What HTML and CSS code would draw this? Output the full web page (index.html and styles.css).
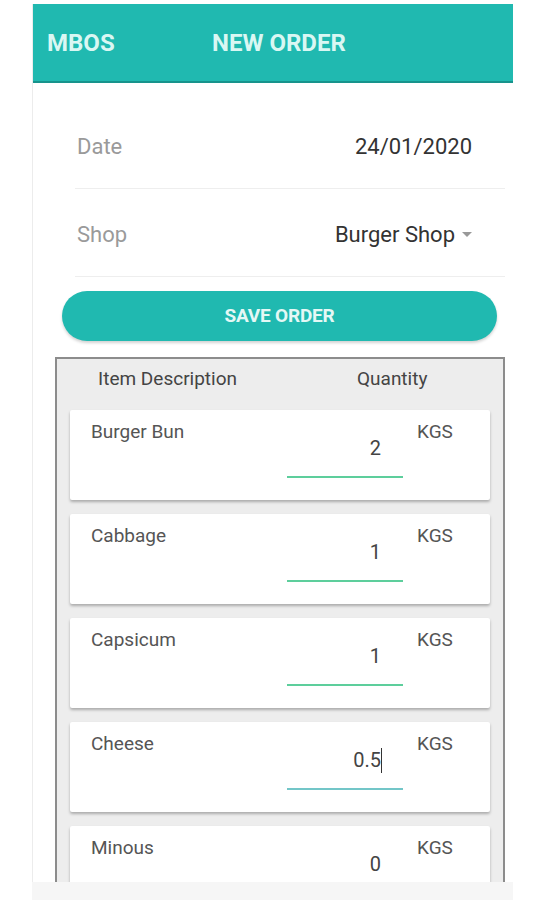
FILE: index.html
```html
<!DOCTYPE html>
<html lang="en">
<head>
    <meta charset="UTF-8">
    <meta name="viewport" content="width=device-width, initial-scale=1.0">
    <title>MBOS - New Order</title>
    <link rel="stylesheet" href="styles.css">
</head>
<body>
    <div class="screen">
        <div class="app-bar">
            <span class="brand">MBOS</span>
            <span class="page-title">NEW ORDER</span>
        </div>

        <div class="form">
            <div class="form-row">
                <span class="label">Date</span>
                <span class="value">24/01/2020</span>
            </div>
            <div class="form-row">
                <span class="label">Shop</span>
                <span class="value">Burger Shop <span class="caret"></span></span>
            </div>
        </div>

        <button class="save-btn">SAVE ORDER</button>

        <div class="items">
            <div class="items-head">
                <span class="col-desc">Item Description</span>
                <span class="col-qty">Quantity</span>
            </div>

            <div class="item">
                <span class="item-name">Burger Bun</span>
                <div class="qty"><span class="qty-val">2</span></div>
                <span class="unit">KGS</span>
            </div>
            <div class="item">
                <span class="item-name">Cabbage</span>
                <div class="qty"><span class="qty-val">1</span></div>
                <span class="unit">KGS</span>
            </div>
            <div class="item">
                <span class="item-name">Capsicum</span>
                <div class="qty"><span class="qty-val">1</span></div>
                <span class="unit">KGS</span>
            </div>
            <div class="item">
                <span class="item-name">Cheese</span>
                <div class="qty focused"><span class="qty-val">0.5<span class="cursor"></span></span></div>
                <span class="unit">KGS</span>
            </div>
            <div class="item">
                <span class="item-name">Minous</span>
                <div class="qty"><span class="qty-val">0</span></div>
                <span class="unit">KGS</span>
            </div>
        </div>
    </div>
    <div class="nav-strip"></div>
</body>
</html>
```

FILE: styles.css
```css
body {
    margin: 0;
    padding-top: 4px;
    background: #ffffff;
    font-family: Roboto, "Liberation Sans", sans-serif;
    color: #333;
    height: 896px;
    overflow: hidden;
}
.screen {
    width: 481px;
    height: 878px;
    margin-left: 32px;
    border-left: 1px solid #ececec;
    box-sizing: border-box;
    overflow: hidden;
    background: #fff;
}
.app-bar {
    height: 79px;
    background: #20b9b0;
    border-bottom: 2px solid #17938c;
    box-sizing: border-box;
    display: flex;
    align-items: center;
    padding-left: 14px;
    color: #d9f7f3;
    font-weight: 700;
    font-size: 24px;
}
.brand {
    width: 165px;
}
.form {
    margin: 18px 8px 0 42px;
}
.form-row {
    height: 88px;
    border-bottom: 1px solid #eeeeee;
    box-sizing: border-box;
    display: flex;
    align-items: center;
    justify-content: space-between;
    padding: 3px 33px 0 2px;
    font-size: 22px;
}
.label {
    color: #9a9a9a;
}
.value {
    color: #333;
    display: flex;
    align-items: center;
}
.caret {
    width: 0;
    height: 0;
    margin-left: 7px;
    border-left: 5px solid transparent;
    border-right: 5px solid transparent;
    border-top: 5px solid #999;
}
.save-btn {
    display: block;
    width: 435px;
    height: 50px;
    margin: 14px 0 0 29px;
    padding-bottom: 3px;
    border: none;
    border-radius: 25px;
    background: #20b9b0;
    color: #e4f8f5;
    font-family: Roboto, "Liberation Sans", sans-serif;
    font-weight: 700;
    font-size: 19px;
    letter-spacing: -0.2px;
    box-shadow: 0 2px 3px rgba(0, 0, 0, 0.18);
}
.items {
    margin: 16px 8px 0 22px;
    border: 2px solid #8c8c8c;
    border-bottom: none;
    background: #ededed;
    padding: 0 13px;
    height: 600px;
}
.items-head {
    height: 51px;
    display: flex;
    align-items: flex-start;
    padding-top: 8px;
    box-sizing: border-box;
    font-size: 19px;
    color: #444;
}
.col-desc {
    width: 259px;
    padding-left: 28px;
}
.item {
    height: 90px;
    margin-bottom: 14px;
    background: #fff;
    border-radius: 2px;
    box-shadow: 0 2px 3px rgba(0, 0, 0, 0.28);
    display: flex;
    align-items: flex-start;
    padding-left: 21px;
    font-size: 19px;
    color: #555;
}
.item-name {
    width: 196px;
    margin-top: 10px;
}
.qty {
    width: 116px;
    height: 68px;
    border-bottom: 2px solid #5dce9c;
    box-sizing: border-box;
    text-align: right;
    padding: 26px 22px 0 0;
}
.qty.focused {
    border-bottom-color: #73c6c8;
}
.qty-val {
    font-size: 20px;
    color: #444;
    position: relative;
}
.cursor {
    position: absolute;
    right: -1px;
    top: 0;
    width: 1px;
    height: 25px;
    background: #333;
}
.unit {
    margin: 10px 0 0 14px;
    color: #555;
}
.nav-strip {
    height: 18px;
    margin-left: 32px;
    width: 481px;
    background: #f6f6f6;
}
```
